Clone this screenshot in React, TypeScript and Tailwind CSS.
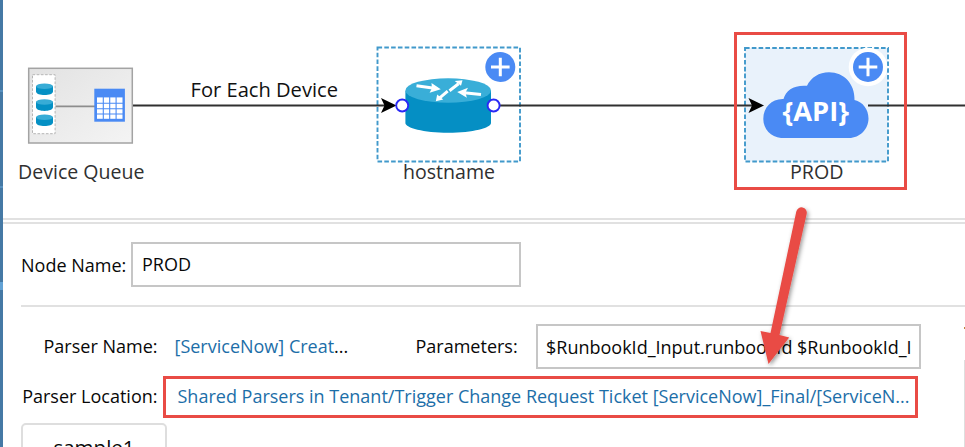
import React from "react";

const RED = "#e94b45";

function QueueNode() {
  return (
    <g>
      <defs>
        <linearGradient id="queueBg" x1="0" y1="0" x2="1" y2="1">
          <stop offset="0" stopColor="#e2e2e2" />
          <stop offset="1" stopColor="#f4f4f4" />
        </linearGradient>
      </defs>
      <rect x="28.7" y="68.3" width="103.6" height="74.7" fill="url(#queueBg)" stroke="#a3a3a3" strokeWidth="1.5" />
      <rect x="32.5" y="74.7" width="22.6" height="59" fill="#fff" stroke="#b5b5b5" strokeDasharray="2.6 1.6" />
      <path d="M55.6 106.3H95" stroke="#8d8d8d" strokeWidth="1.8" />
      {[83, 98.8, 114].map((y) => (
        <g key={y}>
          <path d={`M36 ${y + 3}v5.5c0 4.8 17 4.8 17 0v-5.5z`} fill="#0490c4" />
          <ellipse cx="44.5" cy={y + 3.2} rx="8.5" ry="2.8" fill="#37acd6" />
        </g>
      ))}
      <rect x="94.3" y="88.7" width="30.6" height="33" fill="#4a8af4" />
      <path d="M97 97.4h25.5v21.4H97z" fill="#fff" />
      <path d="M103.3 97v22M109.7 97v22M116.1 97v22M97 103.2h26M97 108.7h26M97 114h26" stroke="#4a8af4" strokeWidth="1.1" />
    </g>
  );
}

function Plus({ cx, cy }: { cx: number; cy: number }) {
  return (
    <g>
      <circle cx={cx} cy={cy} r="15" fill="#4a8af4" />
      <path d={`M${cx - 9.3} ${cy}h18.6M${cx} ${cy - 9.3}v18.6`} stroke="#fff" strokeWidth="3" />
    </g>
  );
}

function Router() {
  return (
    <g>
      <path d="M405.4 91v32c0 5 18 9.7 42.8 9.7s42.8-4.7 42.8-9.7V91z" fill="#058fc4" />
      <ellipse cx="448.2" cy="90.5" rx="42.8" ry="12.2" fill="#39aed8" />
      <g stroke="#fff" strokeWidth="3" fill="none">
        <path d="M416.5 85.8l16 2.300M481 94.600l-17-1.900M449.500 90.800l9-7M447.700 91.200l-8 6.600" />
      </g>
      <g fill="#fff">
        <path d="M431.5 83l9.300 6.300-11.200 3.500 2.300-4.600z" />
        <path d="M468 87.700l-10.800 4.200 9.700 5.800-1.500-5z" />
        <path d="M462.500 80.300l-7.800.7 6.300 4.700z" />
        <path d="M435.800 101.200l1.400-6.600 6 5z" />
      </g>
    </g>
  );
}

function Diagram() {
  return (
    <svg
      className="block h-[218px] w-[962px] shrink-0 font-['Open_Sans','Noto_Sans',sans-serif]"
      viewBox="3 0 962 218"
    >
      <rect x="745" y="48" width="142.5" height="113.5" fill="#e9f2fb" />
      <g fill="none" stroke="#4199cb" strokeWidth="1.9" strokeDasharray="4.6 2.2">
        <rect x="377.5" y="47.5" width="142.5" height="114" />
        <rect x="745" y="48" width="143" height="113.5" />
      </g>

      <path d="M133 105.5h252M500 105.5h252M868 105.5h97" stroke="#303030" strokeWidth="1.8" />
      <path d="M381 98l15.500 7.500L381 113l3.500-7.500z" fill="#000" />
      <path d="M748.500 98l15.500 7.500-15.500 7.500 3.500-7.500z" fill="#000" />

      <QueueNode />
      <Router />
      <g fill="#fff" stroke="#2a2af5" strokeWidth="1.9">
        <circle cx="402.2" cy="105.5" r="6" />
        <circle cx="493.6" cy="105.5" r="6" />
      </g>
      <Plus cx={500.3} cy={67} />

      <path
        d="M781 138C771 137 763.300 129 763.300 119C763.300 107 772 98.500 783.500 99C786 90 794 84.800 807 85.800C811 77.500 819 72.300 829 72.300C844 72.300 855 84 854.500 100C863 102 868.500 109.500 868.500 118.500C868.500 129 860 138 849 138Z"
        fill="#4a8af4"
      />
      <text x="782.5" y="121" fontSize="26" fontWeight="700" fill="#fff" textLength="66.5" lengthAdjust="spacingAndGlyphs">
        {"{API}"}
      </text>
      <circle cx="868" cy="67" r="19.3" fill="#fff" />
      <Plus cx={868} cy={67} />

      <g fill="#303030" fontSize="20">
        <text x="18" y="178.500" textLength="126.500" lengthAdjust="spacingAndGlyphs">Device Queue</text>
        <text x="403" y="178.500" textLength="92" lengthAdjust="spacingAndGlyphs">hostname</text>
        <text x="790" y="178.500" textLength="53.500" lengthAdjust="spacingAndGlyphs">PROD</text>
      </g>
      <text x="190.500" y="96.500" fontSize="20" fill="#111" textLength="147.500" lengthAdjust="spacingAndGlyphs">
        For Each Device
      </text>
      <rect x="735.5" y="33.5" width="170" height="155" fill="none" stroke={RED} strokeWidth="3" />
    </svg>
  );
}

function CalloutArrow() {
  return (
    <svg className="pointer-events-none absolute left-[740px] top-[195px] h-[185px] w-[90px]" viewBox="740 195 90 185">
      <defs>
        <filter id="arrowShadow" x="-30%" y="-10%" width="170%" height="125%">
          <feDropShadow dx="1.5" dy="2" stdDeviation="2" floodColor="#000" floodOpacity="0.4" />
        </filter>
      </defs>
      <path
        d="M796.300 211.500a5.300 5.300 0 0 1 10.400 2.200L779.500 335l9.700 2.500L768.500 364l-8-33 10 2z"
        fill={RED}
        filter="url(#arrowShadow)"
      />
    </svg>
  );
}

export default function App() {
  return (
    <div className="relative flex h-[447px] w-[965px] overflow-hidden bg-white font-['Open_Sans','Noto_Sans',sans-serif] text-[18px] leading-[26px] text-[#080808]">
      <div className="flex w-[3px] shrink-0 flex-col bg-[#4579a5]">
        <div className="mt-[90px] h-[2px] bg-[#5790bf]" />
        <div className="mt-[94px] h-[2px] bg-[#5790bf]" />
        <div className="mt-[94px] h-[8px] bg-[#62a2d5]" />
      </div>

      <main className="flex w-[962px] flex-col">
        <Diagram />
        <div className="h-[6px] shrink-0 border-y-2 border-[#e1e1e1]" />

        <div className="flex h-[81px] shrink-0 pl-[18px] pt-[18px]">
          <label className="w-[110px] shrink-0 whitespace-nowrap pt-[10px]">Node Name:</label>
          <div className="h-[45px] w-[390px] border-2 border-[#c6c6c6] pl-[9px] pt-[7px]">PROD</div>
        </div>
        <div className="ml-[18px] h-[2px] shrink-0 bg-[#e1e1e1]" />

        <div className="flex min-h-0 flex-1">
          <section className="flex w-[958px] shrink-0 flex-col">
            <div className="flex h-[69px] shrink-0 pt-[17px]">
              <span className="w-[154.5px] shrink-0 whitespace-nowrap pt-[9px] text-right">Parser Name:</span>
              <span className="w-[241px] shrink-0 whitespace-nowrap pl-[17px] pt-[9px]">
                <span className="text-[#1c6ea8]">[ServiceNow] Creat</span>...
              </span>
              <span className="w-[137.5px] shrink-0 whitespace-nowrap pl-[17px] pt-[9px]">Parameters:</span>
              <div className="h-[45px] w-[385px] shrink-0 overflow-hidden whitespace-nowrap border-2 border-[#c6c6c6] pl-[8px] pt-[8px]">
                $RunbookId_Input.runbookId $RunbookId_I
              </div>
            </div>
            <div className="flex h-[42px] shrink-0">
              <span className="w-[154.5px] shrink-0 whitespace-nowrap pt-[7px] text-right">Parser Location:</span>
              <div className="ml-[5.5px] h-[42px] w-[755px] whitespace-nowrap border-[3px] border-[#e94b45] pl-[11.5px] pt-[4px] text-[#1c6ea8]">
                Shared Parsers in Tenant/Trigger Change Request Ticket [ServiceNow]_Final/[ServiceN...
              </div>
            </div>
            <div className="ml-[18px] mt-[5px] h-[46px] w-[146px] shrink-0 rounded-[5px] border-2 border-[#dedede] pt-[9px] text-center text-[20.5px]">
              sample1
            </div>
          </section>
          <div className="flex w-[4px] flex-col">
            <div className="ml-[3px] mt-[20px] h-[2px] w-px bg-[#bd8440]" />
            <div className="ml-[3px] mt-[31px] flex-1 border-l border-[#dedede]" />
          </div>
        </div>
      </main>
      <CalloutArrow />
    </div>
  );
}
